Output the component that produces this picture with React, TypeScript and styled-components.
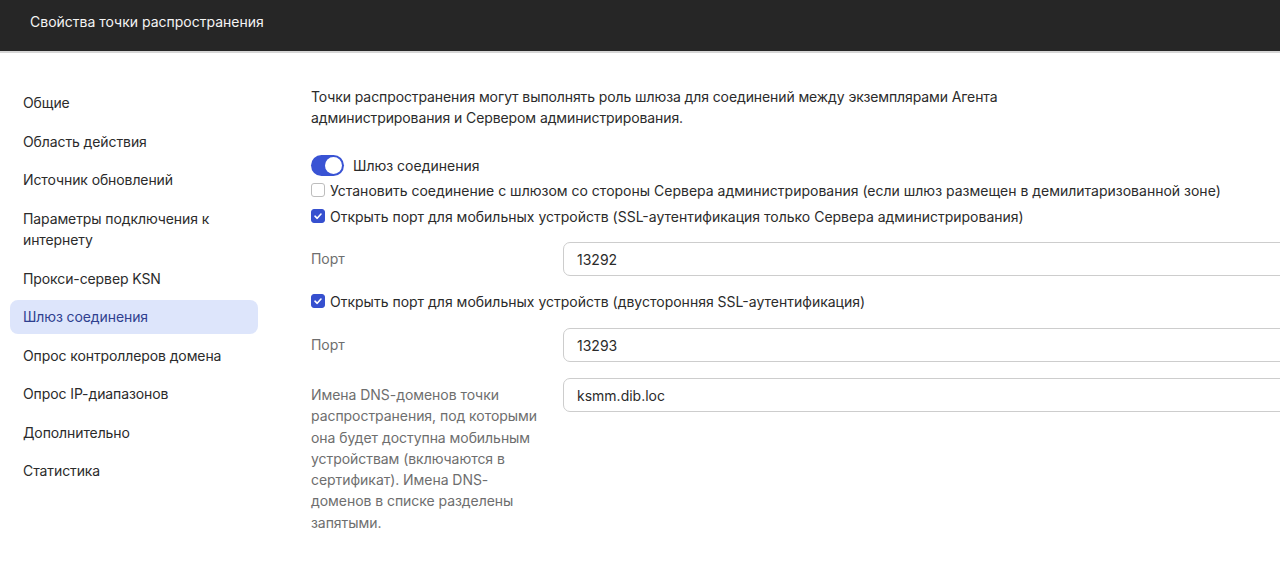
import React from 'react';
import styled, { createGlobalStyle } from 'styled-components';

const GlobalStyle = createGlobalStyle`
	html, body {
		margin: 0;
		padding: 0;
		background: #ffffff;
		overflow: hidden;
	}
	body {
		font-family: Inter, 'Noto Sans', sans-serif;
		color: #2b2b2b;
	}
	* {
		box-sizing: border-box;
	}
`;

const Page = styled.div`
	width: 1280px;
	height: 568px;
	display: flex;
	flex-direction: column;
	overflow: hidden;
`;

const Header = styled.header`
	height: 53px;
	flex-shrink: 0;
	background: #262626;
	border-bottom: 2px solid #d6d6d6;
	display: flex;
	align-items: center;
	padding: 0 30px 9px 30px;
	font-size: 14px;
	color: #f4f4f4;
`;

const Body = styled.div`
	display: flex;
	flex: 1;
	min-height: 0;
`;

const Sidebar = styled.nav`
	width: 268px;
	flex-shrink: 0;
	padding: 33px 10px 0 10px;
	display: flex;
	flex-direction: column;
	gap: 5px;
`;

const NavItem = styled.div<{ $active?: boolean }>`
	padding: 6px 13px;
	border-radius: 8px;
	font-size: 14px;
	line-height: 21.5px;
	letter-spacing: -0.1px;
	color: ${(p) => (p.$active ? '#2f3f8f' : '#2b2b2b')};
	background: ${(p) => (p.$active ? '#dde5fb' : 'transparent')};
`;

const Main = styled.main`
	flex: 1;
	padding: 33px 0 0 43px;
	display: flex;
	flex-direction: column;
`;

const Intro = styled.p`
	margin: 0;
	width: 720px;
	font-size: 14px;
	line-height: 21px;
	letter-spacing: -0.1px;
	color: #2b2b2b;
`;

const ToggleRow = styled.label`
	display: flex;
	align-items: center;
	gap: 9px;
	height: 22px;
	margin-top: 26px;
	font-size: 14px;
`;

const Toggle = styled.span<{ $on: boolean }>`
	width: 33px;
	height: 21px;
	border-radius: 11px;
	background: ${(p) => (p.$on ? '#3953d4' : '#c4c4c4')};
	display: flex;
	align-items: center;
	justify-content: ${(p) => (p.$on ? 'flex-end' : 'flex-start')};
	padding: 0 2px;
`;

const Knob = styled.span`
	width: 17px;
	height: 17px;
	border-radius: 50%;
	background: #ffffff;
`;

const CheckRow = styled.label<{ $top: number }>`
	display: flex;
	align-items: center;
	gap: 5px;
	height: 22px;
	margin-top: ${(p) => p.$top}px;
	font-size: 14px;
	white-space: nowrap;
`;

const Box = styled.span<{ $checked: boolean }>`
	width: 14px;
	height: 14px;
	border-radius: 3px;
	flex-shrink: 0;
	display: flex;
	align-items: center;
	justify-content: center;
	background: ${(p) => (p.$checked ? '#3650cf' : '#ffffff')};
	border: 1px solid ${(p) => (p.$checked ? '#3650cf' : '#bdbdbd')};
`;

const FieldRow = styled.div<{ $top: number }>`
	display: grid;
	grid-template-columns: 252px 730px;
	align-items: start;
	margin-top: ${(p) => p.$top}px;
`;

const FieldLabel = styled.div`
	padding-top: 6px;
	width: 234px;
	font-size: 14px;
	line-height: 21.3px;
	letter-spacing: -0.05px;
	color: #6e6e6e;
`;

const Input = styled.div`
	height: 34px;
	border: 1px solid #cdcdcd;
	border-radius: 7px;
	padding: 0 13px;
	display: flex;
	align-items: center;
	font-size: 14px;
	color: #2b2b2b;
	background: #ffffff;
`;

const navItems = [
	'Общие',
	'Область действия',
	'Источник обновлений',
	'Параметры подключения к интернету',
	'Прокси-сервер KSN',
	'Шлюз соединения',
	'Опрос контроллеров домена',
	'Опрос IP-диапазонов',
	'Дополнительно',
	'Статистика',
];

function Check({ checked }: { checked: boolean }) {
	return (
		<Box $checked={checked}>
			{checked && (
				<svg width='10' height='10' viewBox='0 0 10 10'>
					<path d='M2 5.2 L4.2 7.3 L8 3' fill='none' stroke='#ffffff' strokeWidth='1.6' strokeLinecap='round' strokeLinejoin='round' />
				</svg>
			)}
		</Box>
	);
}

export default function App() {
	return (
		<>
			<GlobalStyle />
			<Page>
				<Header>Свойства точки распространения</Header>
				<Body>
					<Sidebar>
						{navItems.map((item) => (
							<NavItem key={item} $active={item === 'Шлюз соединения'}>
								{item === 'Параметры подключения к интернету' ? (
									<>
										Параметры подключения к<br />
										интернету
									</>
								) : (
									item
								)}
							</NavItem>
						))}
					</Sidebar>
					<Main>
						<Intro>
							Точки распространения могут выполнять роль шлюза для соединений между экземплярами Агента администрирования и Сервером администрирования.
						</Intro>
						<ToggleRow>
							<Toggle $on>
								<Knob />
							</Toggle>
							Шлюз соединения
						</ToggleRow>
						<CheckRow $top={3}>
							<Check checked={false} />
							Установить соединение с шлюзом со стороны Сервера администрирования (если шлюз размещен в демилитаризованной зоне)
						</CheckRow>
						<CheckRow $top={4}>
							<Check checked />
							Открыть порт для мобильных устройств (SSL-аутентификация только Сервера администрирования)
						</CheckRow>
						<FieldRow $top={15}>
							<FieldLabel>Порт</FieldLabel>
							<Input>13292</Input>
						</FieldRow>
						<CheckRow $top={14}>
							<Check checked />
							Открыть порт для мобильных устройств (двусторонняя SSL-аутентификация)
						</CheckRow>
						<FieldRow $top={16}>
							<FieldLabel>Порт</FieldLabel>
							<Input>13293</Input>
						</FieldRow>
						<FieldRow $top={16}>
							<FieldLabel>
								Имена DNS-доменов точки распространения, под которыми она будет доступна мобильным устройствам (включаются в сертификат). Имена DNS-доменов в списке разделены запятыми.
							</FieldLabel>
							<Input>ksmm.dib.loc</Input>
						</FieldRow>
					</Main>
				</Body>
			</Page>
		</>
	);
}
